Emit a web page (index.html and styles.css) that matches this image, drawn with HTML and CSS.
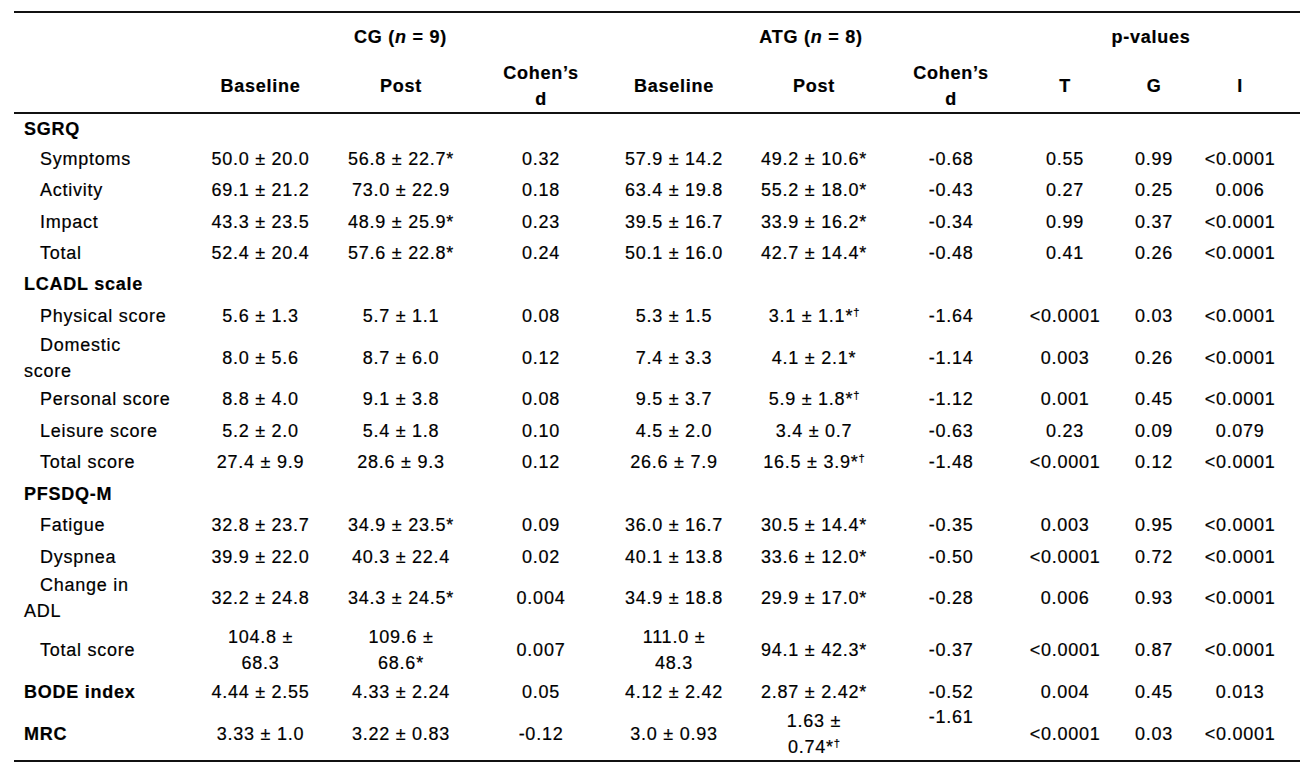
FILE: index.html
```html
<!DOCTYPE html>
<html lang="en">
<head>
<meta charset="utf-8">
<title>Outcomes table</title>
<link rel="stylesheet" href="styles.css">
</head>
<body>
<table class="results">
  <colgroup>
    <col class="w-label">
    <col class="w-cg-base">
    <col class="w-cg-post">
    <col class="w-cg-d">
    <col class="w-atg-base">
    <col class="w-atg-post">
    <col class="w-atg-d">
    <col class="w-t">
    <col class="w-g">
    <col class="w-i">
  </colgroup>
  <thead>
    <tr class="group-row">
      <th></th>
      <th colspan="3">CG (<i>n</i> = 9)</th>
      <th colspan="3">ATG (<i>n</i> = 8)</th>
      <th colspan="3">p-values</th>
    </tr>
    <tr class="sub-row">
      <th></th>
      <th>Baseline</th>
      <th>Post</th>
      <th>Cohen’s<br>d</th>
      <th>Baseline</th>
      <th>Post</th>
      <th>Cohen’s<br>d</th>
      <th>T</th>
      <th>G</th>
      <th>I</th>
    </tr>
  </thead>
  <tbody>
    <tr class="section first"><th class="label">SGRQ</th><td></td><td></td><td></td><td></td><td></td><td></td><td></td><td></td><td></td></tr>
    <tr><th class="label sub">Symptoms</th><td>50.0 ± 20.0</td><td>56.8 ± 22.7*</td><td>0.32</td><td>57.9 ± 14.2</td><td>49.2 ± 10.6*</td><td>-0.68</td><td>0.55</td><td>0.99</td><td>&lt;0.0001</td></tr>
    <tr><th class="label sub">Activity</th><td>69.1 ± 21.2</td><td>73.0 ± 22.9</td><td>0.18</td><td>63.4 ± 19.8</td><td>55.2 ± 18.0*</td><td>-0.43</td><td>0.27</td><td>0.25</td><td>0.006</td></tr>
    <tr><th class="label sub">Impact</th><td>43.3 ± 23.5</td><td>48.9 ± 25.9*</td><td>0.23</td><td>39.5 ± 16.7</td><td>33.9 ± 16.2*</td><td>-0.34</td><td>0.99</td><td>0.37</td><td>&lt;0.0001</td></tr>
    <tr><th class="label sub">Total</th><td>52.4 ± 20.4</td><td>57.6 ± 22.8*</td><td>0.24</td><td>50.1 ± 16.0</td><td>42.7 ± 14.4*</td><td>-0.48</td><td>0.41</td><td>0.26</td><td>&lt;0.0001</td></tr>
    <tr class="section"><th class="label">LCADL scale</th><td></td><td></td><td></td><td></td><td></td><td></td><td></td><td></td><td></td></tr>
    <tr><th class="label sub">Physical score</th><td>5.6 ± 1.3</td><td>5.7 ± 1.1</td><td>0.08</td><td>5.3 ± 1.5</td><td>3.1 ± 1.1*<sup class="dag">†</sup></td><td>-1.64</td><td>&lt;0.0001</td><td>0.03</td><td>&lt;0.0001</td></tr>
    <tr><th class="label sub">Domestic<br>score</th><td>8.0 ± 5.6</td><td>8.7 ± 6.0</td><td>0.12</td><td>7.4 ± 3.3</td><td>4.1 ± 2.1*</td><td>-1.14</td><td>0.003</td><td>0.26</td><td>&lt;0.0001</td></tr>
    <tr><th class="label sub">Personal score</th><td>8.8 ± 4.0</td><td>9.1 ± 3.8</td><td>0.08</td><td>9.5 ± 3.7</td><td>5.9 ± 1.8*<sup class="dag">†</sup></td><td>-1.12</td><td>0.001</td><td>0.45</td><td>&lt;0.0001</td></tr>
    <tr><th class="label sub">Leisure score</th><td>5.2 ± 2.0</td><td>5.4 ± 1.8</td><td>0.10</td><td>4.5 ± 2.0</td><td>3.4 ± 0.7</td><td>-0.63</td><td>0.23</td><td>0.09</td><td>0.079</td></tr>
    <tr><th class="label sub">Total score</th><td>27.4 ± 9.9</td><td>28.6 ± 9.3</td><td>0.12</td><td>26.6 ± 7.9</td><td>16.5 ± 3.9*<sup class="dag">†</sup></td><td>-1.48</td><td>&lt;0.0001</td><td>0.12</td><td>&lt;0.0001</td></tr>
    <tr class="section"><th class="label">PFSDQ-M</th><td></td><td></td><td></td><td></td><td></td><td></td><td></td><td></td><td></td></tr>
    <tr><th class="label sub">Fatigue</th><td>32.8 ± 23.7</td><td>34.9 ± 23.5*</td><td>0.09</td><td>36.0 ± 16.7</td><td>30.5 ± 14.4*</td><td>-0.35</td><td>0.003</td><td>0.95</td><td>&lt;0.0001</td></tr>
    <tr><th class="label sub">Dyspnea</th><td>39.9 ± 22.0</td><td>40.3 ± 22.4</td><td>0.02</td><td>40.1 ± 13.8</td><td>33.6 ± 12.0*</td><td>-0.50</td><td>&lt;0.0001</td><td>0.72</td><td>&lt;0.0001</td></tr>
    <tr><th class="label sub">Change in<br>ADL</th><td>32.2 ± 24.8</td><td>34.3 ± 24.5*</td><td>0.004</td><td>34.9 ± 18.8</td><td>29.9 ± 17.0*</td><td>-0.28</td><td>0.006</td><td>0.93</td><td>&lt;0.0001</td></tr>
    <tr><th class="label sub">Total score</th><td>104.8 ±<br>68.3</td><td>109.6 ±<br>68.6*</td><td>0.007</td><td>111.0 ±<br>48.3</td><td>94.1 ± 42.3*</td><td>-0.37</td><td>&lt;0.0001</td><td>0.87</td><td>&lt;0.0001</td></tr>
    <tr><th class="label">BODE index</th><td>4.44 ± 2.55</td><td>4.33 ± 2.24</td><td>0.05</td><td>4.12 ± 2.42</td><td>2.87 ± 2.42*</td><td>-0.52</td><td>0.004</td><td>0.45</td><td>0.013</td></tr>
    <tr class="last"><th class="label">MRC</th><td>3.33 ± 1.0</td><td>3.22 ± 0.83</td><td>-0.12</td><td>3.0 ± 0.93</td><td>1.63 ±<br>0.74*<sup class="dag">†</sup></td><td class="top"><span class="raised">-1.61</span></td><td>&lt;0.0001</td><td>0.03</td><td>&lt;0.0001</td></tr>
  </tbody>
</table>
</body>
</html>
```

FILE: styles.css
```css
html, body {
  margin: 0;
  padding: 0;
  background: #ffffff;
}

body {
  font-family: "Liberation Sans", Arial, sans-serif;
  font-size: 18px;
  color: #000000;
}

.results {
  margin: 11px 0 0 14px;
  border-collapse: collapse;
  table-layout: fixed;
  width: 1286px;
  border-top: 2px solid #111111;
  border-bottom: 2px solid #111111;
  letter-spacing: 0.75px;
  -webkit-text-stroke: 0.2px #000000;
}

.w-label { width: 167px; }
.w-cg-base { width: 159px; }
.w-cg-post { width: 122px; }
.w-cg-d { width: 158px; }
.w-atg-base { width: 108px; }
.w-atg-post { width: 172px; }
.w-atg-d { width: 102px; }
.w-t { width: 126px; }
.w-g { width: 52px; }
.w-i { width: 120px; }

.results th,
.results td {
  padding: 0;
  line-height: 26px;
  text-align: center;
  vertical-align: middle;
  white-space: nowrap;
}

.results thead th {
  font-weight: bold;
}

.results thead .group-row th {
  height: 47px;
}

.results thead .sub-row th {
  height: 52px;
  border-bottom: 2px solid #111111;
}

.results i {
  font-style: italic;
}

.results tbody th,
.results tbody td {
  height: 31.45px;
}

.results tbody tr.first th,
.results tbody tr.first td {
  height: 29px;
}

.results tbody th.label {
  text-align: left;
  padding-left: 10px;
  font-weight: bold;
}

.results tbody th.label.sub {
  font-weight: normal;
  text-indent: 16px;
}

.results td.top {
  vertical-align: top;
}

.raised {
  display: block;
  margin-top: -4px;
}

.dag {
  font-size: 0.62em;
  line-height: 0;
  vertical-align: 0.55em;
  letter-spacing: 0;
}
```
